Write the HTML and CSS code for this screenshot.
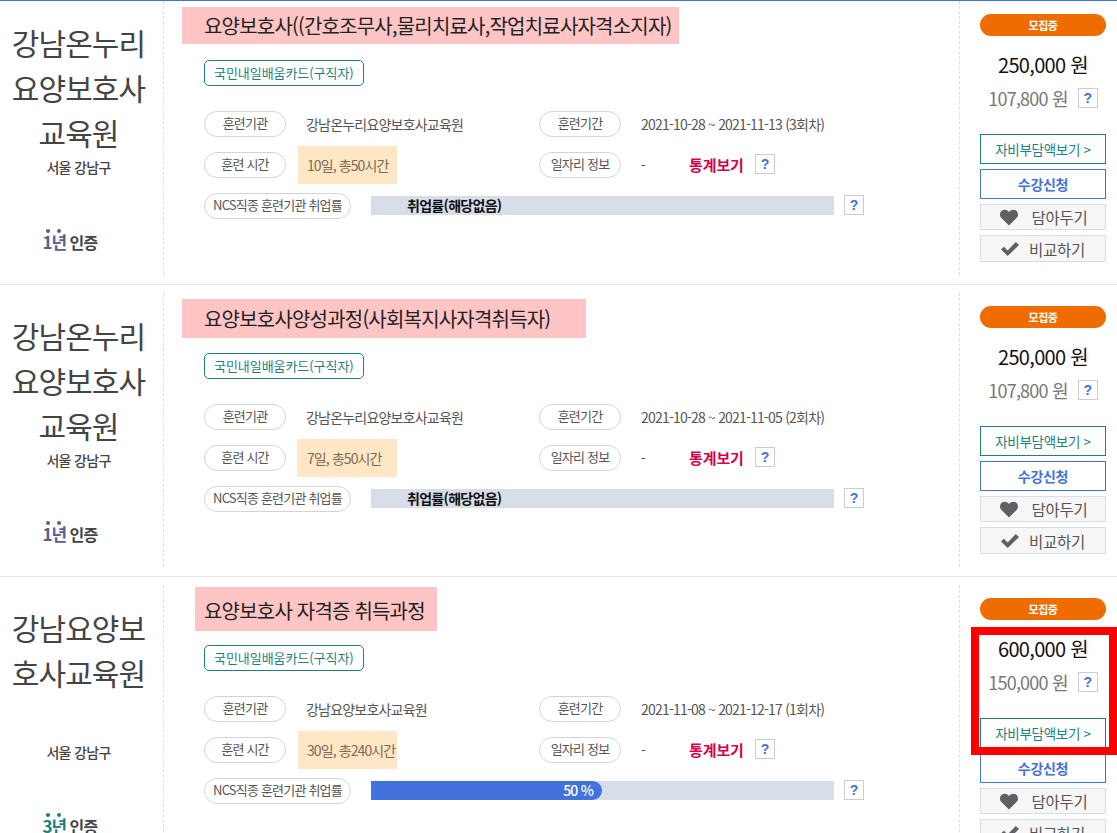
FILE: index.html
```html
<!DOCTYPE html>
<html lang="ko">
<head>
<meta charset="utf-8">
<title>훈련과정 목록</title>
<link rel="stylesheet" href="styles.css">
</head>
<body>
<div class="list">
  <section class="row row-first">
    <div class="org">
      <h2 class="org-name">강남온누리<br>요양보호사<br>교육원</h2>
      <p class="org-area">서울 강남구</p>
      <p class="cert"><span class="cert-year">1년</span> 인증</p>
    </div>
    <div class="main">
      <h3 class="title title-a"><span>요양보호사((간호조무사,물리치료사,작업치료사자격소지자)</span></h3>
      <span class="tag">국민내일배움카드(구직자)</span>
      <div class="info">
        <div class="line">
          <span class="pill">훈련기관</span><span class="val val-org">강남온누리요양보호사교육원</span>
          <span class="pill">훈련기간</span><span class="val">2021-10-28 ~ 2021-11-13 (3회차)</span>
        </div>
        <div class="line">
          <span class="pill">훈련 시간</span><span class="val val-org"><span class="hours">10일, 총50시간</span></span>
          <span class="pill">일자리 정보</span><span class="val val-dash">-</span><a class="stats">통계보기</a><span class="help">?</span>
        </div>
        <div class="line">
          <span class="pill pill-wide">NCS직종 훈련기관 취업률</span>
          <div class="bar"><span class="bar-none">취업률(해당없음)</span></div><span class="help">?</span>
        </div>
      </div>
    </div>
    <div class="side">
      <div class="status">모집중</div>
      <div class="price">250,000 원</div>
      <div class="price-sub"><span>107,800 원</span><span class="help">?</span></div>
      <button class="btn btn-green">자비부담액보기 &gt;</button>
      <button class="btn btn-blue">수강신청</button>
      <button class="btn btn-gray"><svg class="ico-heart" viewBox="0 0 20 18"><path d="M10 17.5 2 9.6C-.2 7.3.1 3.7 2.2 1.9 4.5 0 7.9.5 10 3.2 12.1.5 15.500 0 17.800 1.900c2.100 1.800 2.400 5.400.2 7.700z"/></svg>담아두기</button>
      <button class="btn btn-gray"><svg class="ico-check" viewBox="0 0 18 14"><path d="M0 7.5 2.800 4.800 6.600 8.400 14.800 0 18 3 6.700 14z"/></svg>비교하기</button>
    </div>
  </section>

  <section class="row">
    <div class="org">
      <h2 class="org-name">강남온누리<br>요양보호사<br>교육원</h2>
      <p class="org-area">서울 강남구</p>
      <p class="cert"><span class="cert-year">1년</span> 인증</p>
    </div>
    <div class="main">
      <h3 class="title title-b"><span>요양보호사양성과정(사회복지사자격취득자)</span></h3>
      <span class="tag">국민내일배움카드(구직자)</span>
      <div class="info">
        <div class="line">
          <span class="pill">훈련기관</span><span class="val val-org">강남온누리요양보호사교육원</span>
          <span class="pill">훈련기간</span><span class="val">2021-10-28 ~ 2021-11-05 (2회차)</span>
        </div>
        <div class="line">
          <span class="pill">훈련 시간</span><span class="val val-org"><span class="hours hours-wide">7일, 총50시간</span></span>
          <span class="pill">일자리 정보</span><span class="val val-dash">-</span><a class="stats">통계보기</a><span class="help">?</span>
        </div>
        <div class="line">
          <span class="pill pill-wide">NCS직종 훈련기관 취업률</span>
          <div class="bar"><span class="bar-none">취업률(해당없음)</span></div><span class="help">?</span>
        </div>
      </div>
    </div>
    <div class="side">
      <div class="status">모집중</div>
      <div class="price">250,000 원</div>
      <div class="price-sub"><span>107,800 원</span><span class="help">?</span></div>
      <button class="btn btn-green">자비부담액보기 &gt;</button>
      <button class="btn btn-blue">수강신청</button>
      <button class="btn btn-gray"><svg class="ico-heart" viewBox="0 0 20 18"><path d="M10 17.5 2 9.6C-.2 7.3.1 3.7 2.2 1.9 4.5 0 7.9.5 10 3.2 12.1.5 15.500 0 17.800 1.900c2.100 1.800 2.400 5.400.2 7.700z"/></svg>담아두기</button>
      <button class="btn btn-gray"><svg class="ico-check" viewBox="0 0 18 14"><path d="M0 7.5 2.800 4.800 6.600 8.400 14.800 0 18 3 6.700 14z"/></svg>비교하기</button>
    </div>
  </section>

  <section class="row row-last">
    <div class="org">
      <h2 class="org-name org-name-two">강남요양보<br>호사교육원</h2>
      <p class="org-area">서울 강남구</p>
      <p class="cert"><span class="cert-year cert-year-green">3년</span> 인증</p>
    </div>
    <div class="main">
      <h3 class="title title-c"><span>요양보호사 자격증 취득과정</span></h3>
      <span class="tag">국민내일배움카드(구직자)</span>
      <div class="info">
        <div class="line">
          <span class="pill">훈련기관</span><span class="val val-org">강남요양보호사교육원</span>
          <span class="pill">훈련기간</span><span class="val">2021-11-08 ~ 2021-12-17 (1회차)</span>
        </div>
        <div class="line">
          <span class="pill">훈련 시간</span><span class="val val-org"><span class="hours">30일, 총240시간</span></span>
          <span class="pill">일자리 정보</span><span class="val val-dash">-</span><a class="stats">통계보기</a><span class="help">?</span>
        </div>
        <div class="line">
          <span class="pill pill-wide">NCS직종 훈련기관 취업률</span>
          <div class="bar"><div class="bar-fill">50 %</div></div><span class="help">?</span>
        </div>
      </div>
    </div>
    <div class="side">
      <div class="status">모집중</div>
      <div class="price">600,000 원</div>
      <div class="price-sub"><span>150,000 원</span><span class="help">?</span></div>
      <button class="btn btn-green">자비부담액보기 &gt;</button>
      <button class="btn btn-blue">수강신청</button>
      <button class="btn btn-gray"><svg class="ico-heart" viewBox="0 0 20 18"><path d="M10 17.5 2 9.6C-.2 7.3.1 3.7 2.2 1.9 4.5 0 7.9.5 10 3.2 12.1.5 15.500 0 17.800 1.900c2.100 1.800 2.400 5.400.2 7.700z"/></svg>담아두기</button>
      <button class="btn btn-gray"><svg class="ico-check" viewBox="0 0 18 14"><path d="M0 7.5 2.800 4.800 6.600 8.400 14.800 0 18 3 6.700 14z"/></svg>비교하기</button>
    </div>
    <div class="mark"></div>
  </section>
</div>
</body>
</html>
```

FILE: styles.css
```css
* { box-sizing: border-box; }
html, body { margin: 0; height: 100%; overflow: hidden; background: #fff; }
body { font-family: "Noto Sans CJK KR", "Noto Sans", sans-serif; color: #555; letter-spacing: -0.8px; }

.list { border-top: 1px solid #4172dd; }
.row { position: relative; display: grid; grid-template-columns: 164px 796px 157px; height: 292px; padding: 8px 0 9px; border-bottom: 1px solid #e4e4e4; }
.row-first { height: 284px; padding-top: 0; }
.row-last { height: 320px; }

.org { display: flex; flex-direction: column; align-items: center; border-right: 1px dashed #ddd; padding-right: 6px; text-align: center; }
.org-name { margin: 20px 0 0; font-size: 30px; font-weight: 400; line-height: 45px; color: #444; letter-spacing: -0.9px; }
.row-first .org-name { margin-top: 19px; }
.row-first .cert { margin-top: 53px; }
.org-name-two { height: 135px; }
.org-area { margin: 2px 0 0; font-size: 14px; line-height: 20px; color: #444; font-weight: 500; letter-spacing: -0.7px; }
.cert { margin: 52px 17px 0 0; font-size: 16px; line-height: 24px; font-weight: 700; color: #444; }
.cert-year { position: relative; color: #566090; font-size: 17px; letter-spacing: -1.2px; }
.cert-year::before { content: ""; position: absolute; left: 3px; top: 0; width: 4px; height: 4px; border-radius: 50%; background: currentColor; box-shadow: 11px 0 0 currentColor; }
.cert-year-green { color: #1f7f7f; }

.main { display: flex; flex-direction: column; align-items: flex-start; }
.title { margin: 6px 0 0 18px; font-size: 20px; font-weight: 400; color: #222; line-height: 37px; background: #ffc5c5; white-space: nowrap; }
.title-a { padding-left: 22px; width: 497px; }
.title-b { padding-left: 22px; width: 404px; height: 39px; line-height: 39px; }
.title-c { margin: 2px 0 0 31px; padding-left: 9px; width: 242px; height: 44px; line-height: 47px; }
.tag { margin: 16px 0 0 40px; height: 26px; padding: 0 9px; border: 1px solid #1f7f7f; border-radius: 5px; color: #1f7f7f; font-size: 13px; line-height: 24px; letter-spacing: -0.05px; }
.title-b + .tag { margin-top: 15px; }
.title-c + .tag { margin-top: 14px; }

.info { margin: 25px 0 0 40px; display: flex; flex-direction: column; gap: 15px; }
.line { display: flex; align-items: center; height: 26px; font-size: 14px; }
.pill { flex: none; width: 82px; height: 26px; border: 1px solid #d4d4d4; border-radius: 13px; text-align: center; font-size: 13px; line-height: 22px; color: #555; }
.pill-wide { width: 147px; }
.val { font-size: 14px; color: #555; line-height: 22px; }
.val-org { width: 233px; margin-left: 20px; }
.val-dash { width: 48px; margin-left: 20px; }
.line .pill + .val:not(.val-org) { margin-left: 20px; }
.hours { display: inline-flex; align-items: center; width: 99px; height: 38px; margin-left: -8px; background: #ffe6c5; color: #7a6a55; padding-left: 9px; white-space: nowrap; letter-spacing: -0.9px; }
.hours-wide { width: 100px; margin-left: -9px; padding-left: 10px; }
.stats { color: #d6004f; font-weight: 700; font-size: 15px; line-height: 22px; width: 66px; letter-spacing: -0.1px; }
.help { flex: none; display: inline-block; width: 20px; height: 20px; border: 1px solid #ccc; text-align: center; font: 700 14px/18px "Liberation Sans", sans-serif; letter-spacing: 0; color: #4172dd; }
.line .help { margin-bottom: 2px; }

.bar { width: 463px; height: 19px; margin: 0 10px 2px 20px; background: #d7dde9; color: #111; font-size: 14px; font-weight: 700; line-height: 18px; letter-spacing: -0.7px; }
.bar-none { display: block; padding-left: 36px; }
.bar-fill { width: 231px; height: 19px; background: #4172dd; border-radius: 0 10px 10px 0; color: #fff; text-align: right; padding-right: 9px; font-weight: 500; letter-spacing: -0.8px; }

.side { display: flex; flex-direction: column; padding: 13px 0 0 20px; width: 157px; border-left: 1px dashed #ddd; margin-left: -1px; }
.status { width: 126px; height: 22px; border-radius: 11px; background: #ef6c00; color: #fff; text-align: center; font-size: 11px; line-height: 22px; font-weight: 700; letter-spacing: -0.4px; }
.price { width: 126px; margin-top: 12px; text-align: center; font-size: 20px; line-height: 34px; color: #111; letter-spacing: -0.7px; }
.price-sub { display: flex; align-items: center; justify-content: center; gap: 10px; width: 126px; height: 32px; font-size: 18px; color: #777; }
.btn { display: flex; align-items: center; justify-content: center; width: 126px; padding: 0; background: #fff; font-family: inherit; letter-spacing: -0.3px; }
.btn-green { height: 30px; margin-top: 20px; border: 1px solid #1f7f7f; color: #1f7f7f; font-size: 13.5px; }
.btn-blue { height: 30px; margin-top: 5px; border: 1px solid #4172dd; color: #4172dd; font-weight: 700; font-size: 14px; }
.btn-gray { height: 26px; margin-top: 5px; border: 1px solid #d7dde9; background: #f6f6f6; color: #555; font-size: 15.5px; }
.btn-gray + .btn-gray { height: 27px; }
.ico-heart { width: 20px; height: 17px; margin-right: 13px; fill: #5f5f66; }
.ico-check { width: 18px; height: 14px; margin-right: 10px; fill: #5f5f66; }

.mark { position: absolute; left: 971px; top: 50px; width: 146px; height: 128px; border: 8px solid #f00; pointer-events: none; }
```
